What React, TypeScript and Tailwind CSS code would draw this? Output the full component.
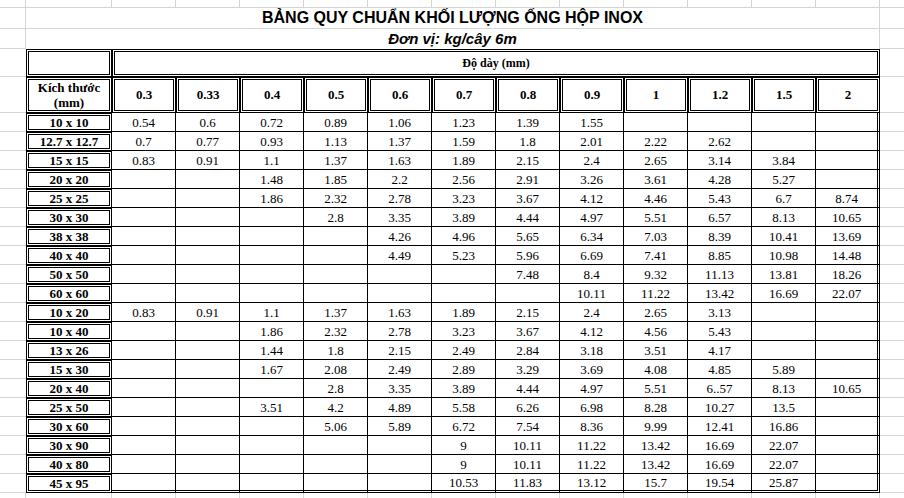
import clsx from "clsx";

const SIZES = ["0.3", "0.33", "0.4", "0.5", "0.6", "0.7", "0.8", "0.9", "1", "1.2", "1.5", "2"];

// kg / 6m bar, blanks where the size isn't made
const ROWS: [string, string[]][] = [
  ["10 x 10", ["0.54", "0.6", "0.72", "0.89", "1.06", "1.23", "1.39", "1.55", "", "", "", ""]],
  ["12.7 x 12.7", ["0.7", "0.77", "0.93", "1.13", "1.37", "1.59", "1.8", "2.01", "2.22", "2.62", "", ""]],
  ["15 x 15", ["0.83", "0.91", "1.1", "1.37", "1.63", "1.89", "2.15", "2.4", "2.65", "3.14", "3.84", ""]],
  ["20 x 20", ["", "", "1.48", "1.85", "2.2", "2.56", "2.91", "3.26", "3.61", "4.28", "5.27", ""]],
  ["25 x 25", ["", "", "1.86", "2.32", "2.78", "3.23", "3.67", "4.12", "4.46", "5.43", "6.7", "8.74"]],
  ["30 x 30", ["", "", "", "2.8", "3.35", "3.89", "4.44", "4.97", "5.51", "6.57", "8.13", "10.65"]],
  ["38 x 38", ["", "", "", "", "4.26", "4.96", "5.65", "6.34", "7.03", "8.39", "10.41", "13.69"]],
  ["40 x 40", ["", "", "", "", "4.49", "5.23", "5.96", "6.69", "7.41", "8.85", "10.98", "14.48"]],
  ["50 x 50", ["", "", "", "", "", "", "7.48", "8.4", "9.32", "11.13", "13.81", "18.26"]],
  ["60 x 60", ["", "", "", "", "", "", "", "10.11", "11.22", "13.42", "16.69", "22.07"]],
  ["10 x 20", ["0.83", "0.91", "1.1", "1.37", "1.63", "1.89", "2.15", "2.4", "2.65", "3.13", "", ""]],
  ["10 x 40", ["", "", "1.86", "2.32", "2.78", "3.23", "3.67", "4.12", "4.56", "5.43", "", ""]],
  ["13 x 26", ["", "", "1.44", "1.8", "2.15", "2.49", "2.84", "3.18", "3.51", "4.17", "", ""]],
  ["15 x 30", ["", "", "1.67", "2.08", "2.49", "2.89", "3.29", "3.69", "4.08", "4.85", "5.89", ""]],
  ["20 x 40", ["", "", "", "2.8", "3.35", "3.89", "4.44", "4.97", "5.51", "6..57", "8.13", "10.65"]],
  ["25 x 50", ["", "", "3.51", "4.2", "4.89", "5.58", "6.26", "6.98", "8.28", "10.27", "13.5", ""]],
  ["30 x 60", ["", "", "", "5.06", "5.89", "6.72", "7.54", "8.36", "9.99", "12.41", "16.86", ""]],
  ["30 x 90", ["", "", "", "", "", "9", "10.11", "11.22", "13.42", "16.69", "22.07", ""]],
  ["40 x 80", ["", "", "", "", "", "9", "10.11", "11.22", "13.42", "16.69", "22.07", ""]],
  ["45 x 95", ["", "", "", "", "", "10.53", "11.83", "13.12", "15.7", "19.54", "25.87", ""]],
];

const grid = "border-[#d4d4d4]";

// plain sheet row with every gridline showing
function BlankRow({ className, bottom = true }: { className: string; bottom?: boolean }) {
  return (
    <div className={clsx("flex", className)}>
      <div className={clsx("w-[26px] shrink-0 border-r", bottom && "border-b", grid)} />
      <div className={clsx("w-[86px] shrink-0 border-r", bottom && "border-b", grid)} />
      {SIZES.map((s) => (
        <div key={s} className={clsx("w-[64px] shrink-0 border-r", bottom && "border-b", grid)} />
      ))}
      <div className={clsx("flex-1", bottom && "border-b", grid)} />
    </div>
  );
}

export default function App() {
  return (
    <div className="w-[904px] h-[498px] overflow-hidden bg-white text-black font-['Liberation_Serif',serif]">
      <BlankRow className="h-[8px]" />

      {/* title */}
      <div className="flex h-[21px]">
        <div className={clsx("w-[26px] shrink-0 border-r border-b", grid)} />
        <div className={clsx("w-[854px] shrink-0 border-r border-b flex items-center justify-center", grid)}>
          <span className="font-['Liberation_Sans',Arial,sans-serif] font-bold text-[16px]">
            BẢNG QUY CHUẨN KHỐI LƯỢNG ỐNG HỘP INOX
          </span>
        </div>
        <div className={clsx("flex-1 border-b", grid)} />
      </div>
      <div className="flex h-[20px]">
        <div className={clsx("w-[26px] shrink-0 border-r border-b", grid)} />
        <div className={clsx("w-[854px] shrink-0 border-r flex items-center justify-center", grid)}>
          <span className="font-['Liberation_Sans',Arial,sans-serif] font-bold italic text-[15px]">
            Đơn vị: kg/cây 6m
          </span>
        </div>
        <div className={clsx("flex-1 border-b", grid)} />
      </div>

      {/* header */}
      <div className="flex h-[28px]">
        <div className={clsx("w-[26px] shrink-0 border-b", grid)} />
        <div className="w-[86px] shrink-0 border-[3px] border-double border-black" />
        <div className="w-[768px] shrink-0 border-[3px] border-double border-black flex items-center justify-center text-[12px] font-bold">
          Độ dày (mm)
        </div>
        <div className={clsx("flex-1 border-b", grid)} />
      </div>
      <div className="flex h-[36px]">
        <div className={clsx("w-[26px] shrink-0 border-b", grid)} />
        <div className="w-[86px] shrink-0 border-[3px] border-double border-black flex flex-col items-center justify-center text-[13px] leading-[15px] font-bold">
          <span>Kích thước</span>
          <span>(mm)</span>
        </div>
        {SIZES.map((s) => (
          <div
            key={s}
            className="w-[64px] shrink-0 border-[3px] border-double border-black flex items-center justify-center text-[13px] font-bold"
          >
            {s}
          </div>
        ))}
        <div className={clsx("flex-1 border-b", grid)} />
      </div>

      {/* body */}
      {ROWS.map(([size, vals], i) => {
        const lastRow = i === ROWS.length - 1;
        return (
          <div key={size + i} className="flex h-[19px] text-[13px] leading-[13px]">
            <div className={clsx("w-[26px] shrink-0 border-b", grid)} />
            <div className="w-[86px] shrink-0 border-[3px] border-double border-black flex items-center justify-center font-bold">
              {size}
            </div>
            {vals.map((v, j) => (
              <div
                key={j}
                className={clsx(
                  "w-[64px] shrink-0 border-black border-double flex items-center justify-center",
                  j === vals.length - 1 ? "border-r-[3px]" : "border-r",
                  lastRow ? "border-b-[3px]" : "border-b"
                )}
              >
                {v}
              </div>
            ))}
            <div className={clsx("flex-1 border-b", grid)} />
          </div>
        );
      })}

      <BlankRow className="h-[5px]" bottom={false} />
    </div>
  );
}
